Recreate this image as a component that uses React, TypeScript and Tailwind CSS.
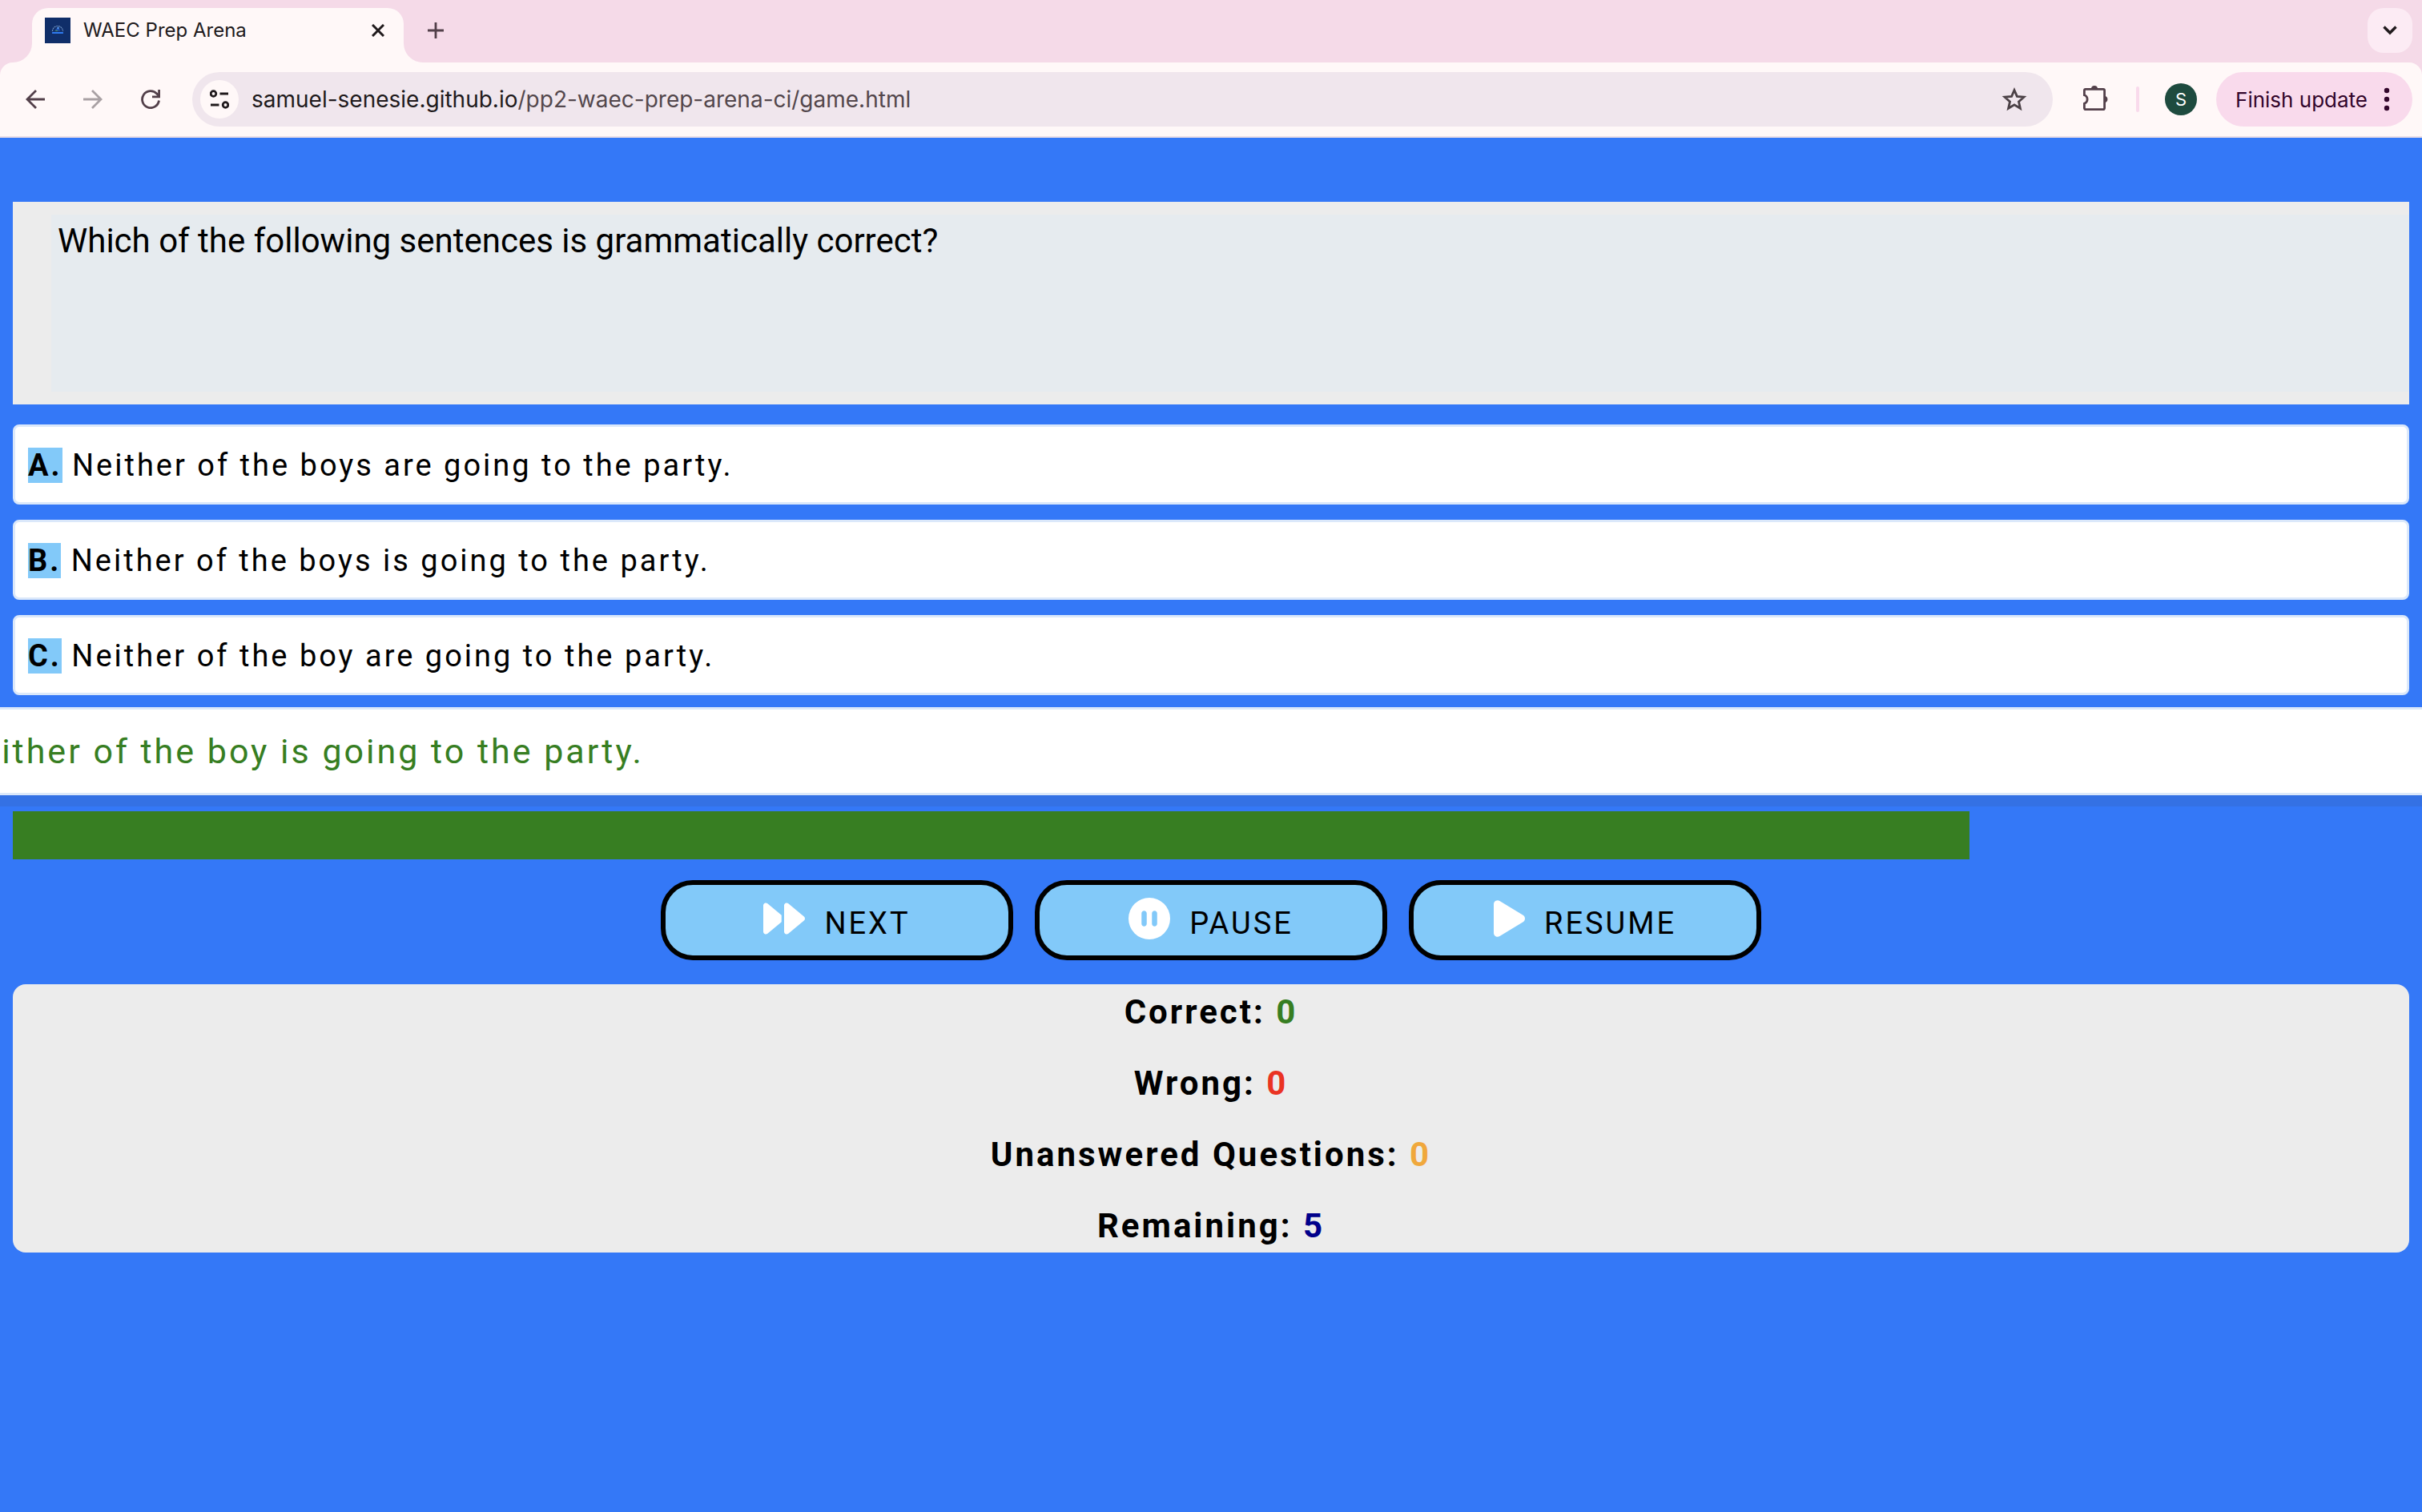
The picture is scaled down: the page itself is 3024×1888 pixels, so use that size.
import { useState } from "react";
import { FaCirclePause, FaForward, FaPlay } from "react-icons/fa6";

const options = [
  { letter: "A.", text: "Neither of the boys are going to the party." },
  { letter: "B.", text: "Neither of the boys is going to the party." },
  { letter: "C.", text: "Neither of the boy are going to the party." },
  { letter: "D.", text: "Neither of the boy is going to the party." },
];

const scores = [
  { label: "Correct:", value: 0, color: "text-[#377e22]" },
  { label: "Wrong:", value: 0, color: "text-[#ea3323]" },
  { label: "Unanswered Questions:", value: 0, color: "text-[#f0a83c]" },
  { label: "Remaining:", value: 5, color: "text-[#00008b]" },
];

const timeLeft = 0.8165;

function Favicon() {
  return (
    <svg viewBox="0 0 32 32" className="size-8 shrink-0" aria-hidden="true">
      <rect width="32" height="32" fill="#102e69" />
      <path d="M9.500 17a6.500 6.500 0 0 1 13 0" fill="none" stroke="#6f93c4" strokeWidth="1.2" strokeDasharray="2 0.7" />
      <path d="M13 16.500a3 3 0 0 1 6 0z" fill="#1d4fb0" />
      <path d="M12 17l3-1.500 1.500 1.500z" fill="#4d8f5a" />
      <circle cx="16.500" cy="13" r="1.200" fill="#5aa2ff" />
      <rect x="9" y="18" width="14" height="2" rx="0.500" fill="#2f7bf0" />
    </svg>
  );
}

function TabStrip() {
  return (
    <div className="flex h-[78px] items-end bg-[#f5dae8] pl-4 pr-3">
      <svg viewBox="0 0 24 24" className="size-6 shrink-0" aria-hidden="true">
        <path d="M24 0v24H0A24 24 0 0 0 24 0z" fill="#fff8f8" />
      </svg>
      <div className="flex h-[68px] w-[464px] items-center rounded-t-[20px] bg-[#fff8f8] pl-4 pr-5 pb-3">
        <Favicon />
        <span className="ml-4 grow text-2xl text-[#201a1c]">WAEC Prep Arena</span>
        <button type="button" aria-label="Close tab" className="flex size-6 items-center justify-center">
          <svg viewBox="0 0 16 16" className="size-4" aria-hidden="true">
            <path d="M1 1l14 14M15 1L1 15" stroke="#201a1c" strokeWidth="3" />
          </svg>
        </button>
      </div>
      <svg viewBox="0 0 24 24" className="size-6 shrink-0" aria-hidden="true">
        <path d="M0 0v24h24A24 24 0 0 1 0 0z" fill="#fff8f8" />
      </svg>
      <button type="button" aria-label="New tab" className="mb-6 flex size-8 items-center justify-center">
        <svg viewBox="0 0 20 20" className="size-5" aria-hidden="true">
          <path d="M10 0v20M0 10h20" stroke="#53404a" strokeWidth="2.800" />
        </svg>
      </button>
      <button
        type="button"
        aria-label="Search tabs"
        className="mb-3 ml-auto flex size-14 items-center justify-center rounded-[20px] bg-[#fcebf4]"
      >
        <svg viewBox="0 0 18 12" className="h-3 w-[18px]" aria-hidden="true">
          <path d="M1.500 1.500L9 9l7.500-7.500" fill="none" stroke="#201a1c" strokeWidth="3.400" />
        </svg>
      </button>
    </div>
  );
}

function Toolbar() {
  return (
    <div className="bg-[#f5dae8]">
      <div className="flex h-[94px] items-center rounded-t-2xl border-b-2 border-[#ecdfe6] bg-[#fff8f8] pl-8 pr-3">
        <button type="button" aria-label="Back">
          <svg viewBox="0 0 24 24" className="size-6" aria-hidden="true">
            <path d="M24 12H2M13 1L2 12l11 11" fill="none" stroke="#53404a" strokeWidth="2.800" />
          </svg>
        </button>
        <button type="button" aria-label="Forward" className="ml-12">
          <svg viewBox="0 0 24 24" className="size-6" aria-hidden="true">
            <path d="M0 12h22M11 1l11 11-11 11" fill="none" stroke="#a9a1a4" strokeWidth="2.800" />
          </svg>
        </button>
        <button type="button" aria-label="Reload" className="ml-12">
          <svg viewBox="0 0 24 24" className="size-6" aria-hidden="true">
            <path d="M22.500 13.500A10.500 10.500 0 1 1 19.800 5L22.500 8" fill="none" stroke="#53404a" strokeWidth="2.800" />
            <path d="M22.600 0v8.800H14" fill="none" stroke="#53404a" strokeWidth="2.800" />
          </svg>
        </button>
        <div className="ml-10 flex h-[68px] grow items-center rounded-full bg-[#f0e6ed] pl-2.5 pr-8">
          <button
            type="button"
            aria-label="View site information"
            className="flex size-12 shrink-0 items-center justify-center rounded-full bg-[#fff8f8]"
          >
            <svg viewBox="0 0 24 24" className="size-6" fill="none" stroke="#201a1c" strokeWidth="2.800" aria-hidden="true">
              <circle cx="4.500" cy="5" r="3.300" />
              <path d="M12.500 5H23M1 19h10.500" />
              <circle cx="19.500" cy="19" r="3.300" />
            </svg>
          </button>
          <label htmlFor="address" className="ml-4 text-[28px] leading-9 text-[#201a1c]">
            samuel-senesie.github.io
          </label>
          <input
            id="address"
            type="text"
            defaultValue="/pp2-waec-prep-arena-ci/game.html"
            className="min-w-0 grow bg-transparent text-[28px] leading-9 text-[#53474c] outline-none"
          />
          <button type="button" aria-label="Bookmark this tab">
            <svg viewBox="0 0 32 32" className="size-8" aria-hidden="true">
              <path
                d="M16 4.500l3.400 7.900 8.600.8-6.500 5.700 1.900 8.400L16 22.900l-7.400 4.400 1.900-8.400L4 13.200l8.600-.8z"
                fill="none"
                stroke="#4b4146"
                strokeWidth="2.800"
              />
            </svg>
          </button>
        </div>
        <button type="button" aria-label="Extensions" className="mb-0.5 ml-[38px]">
          <svg viewBox="0 0 34 34" className="size-[34px]" aria-hidden="true">
            <path
              d="M3 5.400h22.100a1.500 1.500 0 0 1 1.500 1.500v22.200a1.500 1.500 0 0 1-1.500 1.500H2.900a1.500 1.500 0 0 1-1.500-1.500V23.200a5.500 5.500 0 0 0 0-10.400V6.900a1.500 1.500 0 0 1 1.500-1.500z"
              fill="none"
              stroke="#53404a"
              strokeWidth="2.800"
            />
            <path d="M10 5a4 4 0 0 1 8 0zM27.500 14a4.200 4.200 0 0 1 0 8z" fill="#53404a" />
          </svg>
        </button>
        <div className="ml-8 h-8 w-1 rounded-full bg-[#f9daec]" />
        <button
          type="button"
          aria-label="Profile"
          className="ml-8 flex size-10 items-center justify-center rounded-full bg-[#1e4b3f] text-[22px] text-white"
        >
          S
        </button>
        <button
          type="button"
          className="ml-6 flex h-[68px] items-center gap-5 rounded-full bg-[#f9daec] pl-6 pr-7 text-[26px] text-[#33062b]"
        >
          Finish update
          <svg viewBox="0 0 8 32" className="h-8 w-2" fill="#33062b" aria-hidden="true">
            <circle cx="4" cy="5" r="3.200" />
            <circle cx="4" cy="16" r="3.200" />
            <circle cx="4" cy="27" r="3.200" />
          </svg>
        </button>
      </div>
    </div>
  );
}

export default function App() {
  const [paused, setPaused] = useState(false);

  return (
    <div className="min-h-screen overflow-hidden bg-[#3478f7] font-['Inter',sans-serif]">
      <header>
        <TabStrip />
        <Toolbar />
      </header>
      <main className="px-4 pt-20 font-['Roboto',sans-serif] text-black">
        <section className="bg-[#ececec] py-4 pl-12">
          <h1 className="h-[221px] bg-[#e6ebef] px-2 py-2 text-[42px] leading-[49px]">
            Which of the following sentences is grammatically correct?
          </h1>
        </section>

        <div className="mt-[25px] flex flex-col">
          {options.map((option, index) =>
            index < 3 ? (
              <button
                key={option.letter}
                type="button"
                className="mb-[19px] h-[100px] rounded-lg border-[3px] border-[#dbe8fa] bg-white px-4 pt-0.5 text-left text-[38px] tracking-[3px]"
              >
                <span className="bg-[#82c9f9] font-bold">{option.letter}</span> {option.text}
              </button>
            ) : (
              <button
                key={option.letter}
                type="button"
                className="-mx-[150px] -mt-1 h-[110px] rounded-lg border-[3px] border-[#dbe8fa] bg-white px-4 text-left text-[43px] tracking-[3px] text-[#377e22] shadow-[0_14px_0_#3471e4]"
              >
                <span className="bg-[#82c9f9] font-bold">{option.letter}</span> {option.text}
              </button>
            ),
          )}
        </div>

        <div className="mt-5 h-[60px]">
          <div className="h-full bg-[#377e22]" style={{ width: `${timeLeft * 100}%` }} />
        </div>

        <div className="mt-[26px] flex justify-center gap-[27px] text-[38px]">
          <button
            type="button"
            className="flex h-[100px] w-[440px] items-center justify-center gap-6 rounded-[40px] border-[6px] border-black bg-[#82c9f9] tracking-[3px]"
          >
            <FaForward className="mb-1 size-[52px] text-white" />
            <span className="pt-2">NEXT</span>
          </button>
          <button
            type="button"
            aria-pressed={paused}
            onClick={() => setPaused(true)}
            className="flex h-[100px] w-[440px] items-center justify-center gap-6 rounded-[40px] border-[6px] border-black bg-[#82c9f9] tracking-[3px]"
          >
            <FaCirclePause className="mb-1 size-[52px] text-white" />
            <span className="pt-2">PAUSE</span>
          </button>
          <button
            type="button"
            onClick={() => setPaused(false)}
            className="flex h-[100px] w-[440px] items-center justify-center gap-6 rounded-[40px] border-[6px] border-black bg-[#82c9f9] tracking-[3px]"
          >
            <FaPlay className="mb-1 h-[52px] w-[39px] text-white" />
            <span className="pt-2">RESUME</span>
          </button>
        </div>

        <section className="mt-[30px] flex flex-col gap-10 rounded-2xl bg-[#ececec] pt-2.5 pb-[9px] text-center text-[42px] leading-[49px] font-bold tracking-[3px]">
          {scores.map((score) => (
            <p key={score.label}>
              {score.label} <span className={score.color}>{score.value}</span>
            </p>
          ))}
        </section>
      </main>
    </div>
  );
}
